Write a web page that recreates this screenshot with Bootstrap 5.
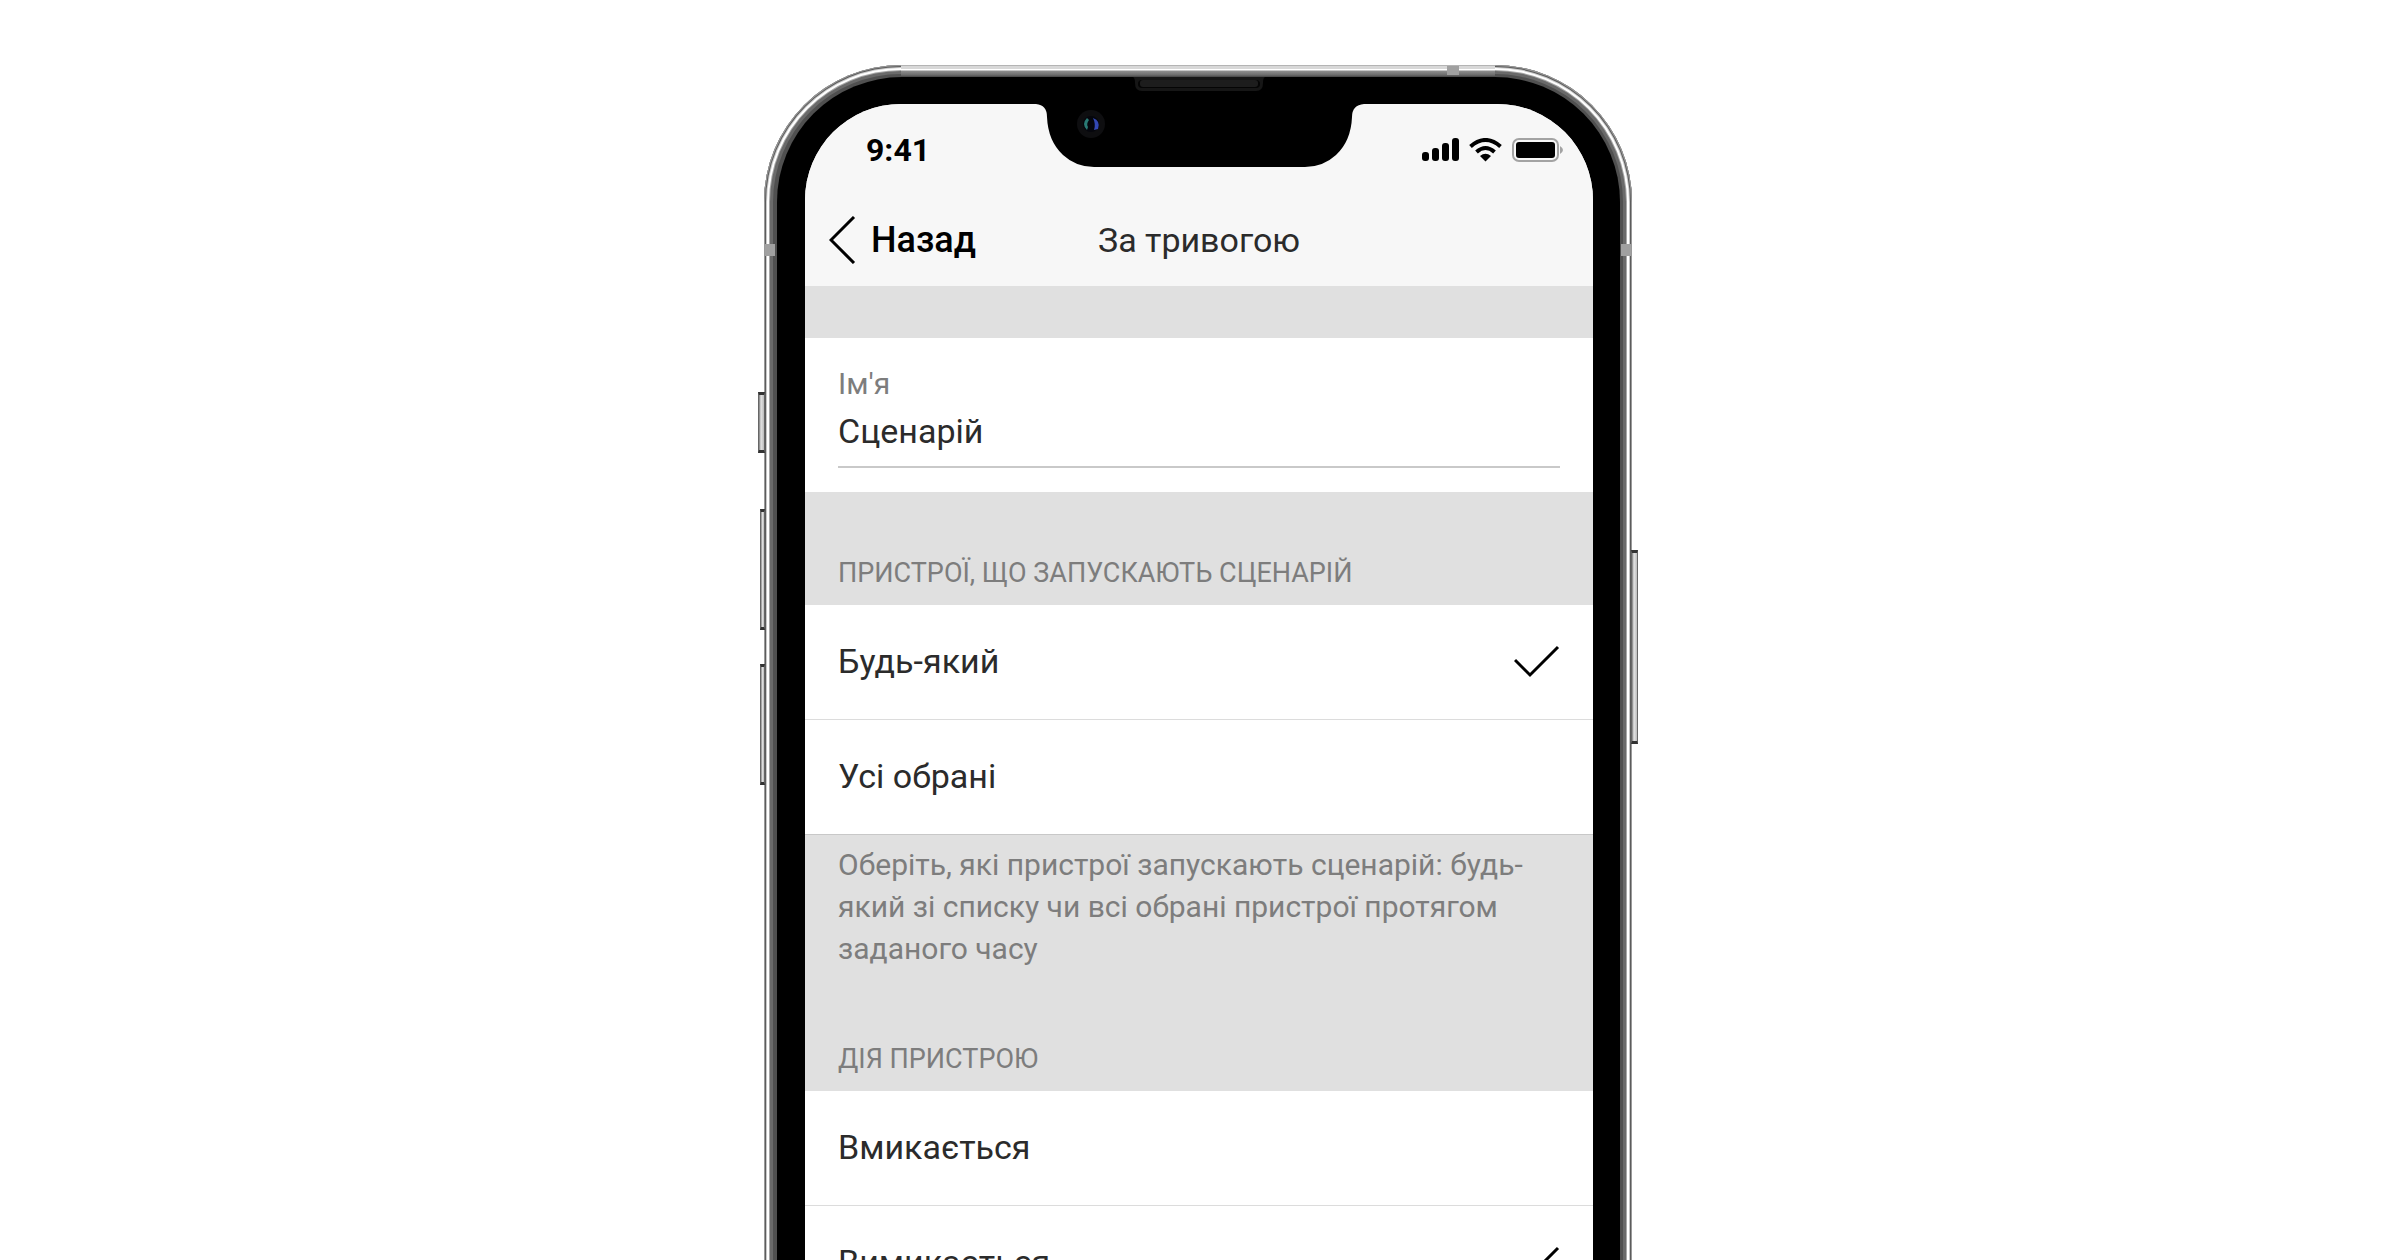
<!DOCTYPE html>
<html lang="uk">
<head>
<meta charset="utf-8">
<meta name="viewport" content="width=device-width, initial-scale=1">
<title>За тривогою</title>
<link href="https://cdn.jsdelivr.net/npm/bootstrap@5.3.0/dist/css/bootstrap.min.css" rel="stylesheet">
<style>
body{font-family:Roboto,"Noto Sans",sans-serif;background:#fff;color:#2b2b2b}
.stage{height:100vh;padding:65px 4px 0 0}
.phone{width:868px;max-width:100%;padding:12px 12px 0 13px;border-radius:137px 137px 0 0;background:#505050;
 box-shadow:inset 0 0 0 1px #9a9a9a,inset 0 0 0 2px #5c5c5c,inset 0 0 0 3px #c8c8c8,inset 0 0 0 5px #fff,inset 0 0 0 6px #a8a8a8,inset 0 0 0 9px #6a6a6a}
.bezel{padding:27px 27px 0 28px;border-radius:125px 125px 0 0;background:#000}
.screen{border-radius:96px 96px 0 0;background:#e0e0e0;min-height:1300px}
.topbar{background:#f7f7f7}
.status{height:92px;padding:0 29px 0 61px}
.clock{font-size:32px;line-height:40px;font-weight:700;color:#000}
.titlebar{height:90px;padding:0 23px 2px}
.back{font-size:36px;line-height:44px;font-weight:500;color:#000;gap:15px}
.title{font-size:34px;line-height:44px;font-weight:400}
.gap-band{height:52px}
.inset{padding-left:33px;padding-right:33px}
.field{height:154px;padding-top:28px}
.field label{font-size:30px;line-height:36px;color:#7d7d7d}
.field input{font-size:34px;line-height:44px;height:66px;padding:2px 0 8px;color:#2b2b2b;border:0;border-bottom:2px solid #c9c9c9;border-radius:0;background:none}
.caption{font-size:27px;line-height:36px;font-weight:400;color:#7d7d7d;height:113px;padding-bottom:14px}
.choice{height:115px;padding-bottom:2px;font-size:34px;line-height:44px;background:#fff;border-bottom:1px solid #dcdcdc;cursor:pointer}
.choice-last{border-bottom-color:#c8c8c8}
.choice svg{display:none}
.choice input:checked+svg{display:block}
.choice input{position:absolute;opacity:0}
.hint{font-size:30px;line-height:42px;color:#7d7d7d;margin:0;padding-top:9px;height:143px}
.key{position:absolute;background:linear-gradient(90deg,#777,#e4e4e4 40%,#bbb);border:1px solid #666;border-top:3px solid #333;border-bottom:3px solid #333}
.key-mute{left:-6px;top:327px;width:7px;height:61px}
.key-up{left:-4px;top:444px;width:5px;height:121px}
.key-down{left:-4px;top:599px;width:5px;height:121px}
.key-side{right:-6px;top:485px;width:7px;height:194px}
.top-edge{position:absolute;left:137px;right:137px;top:0;height:12px;background:linear-gradient(#b4b4b4 0 1px,#d8d8d8 1px 4px,#fff 4px 5px,#8e8e8e 6px,#6c6c6c 10px,#444)}
.seam{position:absolute;background:#a0a0a0}
.seam-left{left:1px;top:179px;width:10px;height:12px}
.seam-right{right:1px;top:179px;width:10px;height:12px}
.seam-top{right:173px;top:1px;width:12px;height:9px}
.notch{position:absolute;left:270px;top:10px}
</style>
<script src="https://cdn.jsdelivr.net/npm/bootstrap@5.3.0/dist/js/bootstrap.bundle.min.js"></script>
</head>
<body>
<div class="stage overflow-hidden">
 <div class="phone position-relative mx-auto">
  <span class="key key-mute"></span><span class="key key-up"></span><span class="key key-down"></span><span class="key key-side"></span>
  <span class="top-edge"></span><span class="seam seam-left"></span><span class="seam seam-right"></span><span class="seam seam-top"></span>
  <div class="bezel">
   <main class="screen overflow-hidden">
    <header class="topbar">
     <div class="status d-flex align-items-center justify-content-between">
      <span class="clock">9:41</span>
      <svg width="142" height="24" viewBox="0 0 142 24" aria-hidden="true">
       <rect x="0" y="14" width="7" height="9" rx="3"/><rect x="10" y="10" width="7" height="13" rx="3"/><rect x="20" y="5" width="7" height="18" rx="3"/><rect x="30" y="0" width="7" height="23" rx="3"/>
       <g fill="none" stroke="#000" stroke-width="4"><path d="M48.500 8.500Q63.500-4.500 78.500 8.500"/><path d="M54.500 14Q63.500 6 72.500 14"/></g>
       <path d="M58 18Q63.500 13.500 69 18L63.500 23.500Z"/>
       <rect x="91" y="1" width="45" height="22" rx="6" fill="none" stroke="#a3a3a3" stroke-width="2"/>
       <rect x="94" y="4" width="39" height="16" rx="3"/>
       <path d="M138 8Q144 12 138 16Z" fill="#a3a3a3"/>
      </svg>
     </div>
     <div class="titlebar d-flex align-items-center justify-content-center position-relative">
      <button class="back btn border-0 p-0 d-flex align-items-center position-absolute start-0 ms-4" type="button">
       <svg width="27" height="48" viewBox="0 0 27 48" fill="none" stroke="#000" stroke-width="3" aria-hidden="true"><path d="M25 1L2 24L25 47"/></svg>Назад
      </button>
      <h1 class="title m-0">За тривогою</h1>
     </div>
    </header>
    <div class="gap-band"></div>
    <div class="field inset bg-white">
     <label class="d-block" for="scenario">Ім'я</label>
     <input class="form-control shadow-none" id="scenario" type="text" value="Сценарій">
    </div>
    <h2 class="caption inset m-0 d-flex align-items-end">ПРИСТРОЇ, ЩО ЗАПУСКАЮТЬ СЦЕНАРІЙ</h2>
    <label class="choice inset d-flex align-items-center justify-content-between">Будь-який
     <input type="radio" name="devices" checked><svg width="46" height="34" viewBox="0 0 46 34" fill="none" stroke="#000" stroke-width="3" aria-hidden="true"><path d="M1 16L16 31L44 3"/></svg></label>
    <label class="choice choice-last inset d-flex align-items-center justify-content-between">Усі обрані
     <input type="radio" name="devices"><svg width="46" height="34" viewBox="0 0 46 34" fill="none" stroke="#000" stroke-width="3" aria-hidden="true"><path d="M1 16L16 31L44 3"/></svg></label>
    <p class="hint inset">Оберіть, які пристрої запускають сценарій: будь-який зі списку чи всі обрані пристрої протягом заданого часу</p>
    <h2 class="caption inset m-0 d-flex align-items-end">ДІЯ ПРИСТРОЮ</h2>
    <label class="choice inset d-flex align-items-center justify-content-between">Вмикається
     <input type="radio" name="action"><svg width="46" height="34" viewBox="0 0 46 34" fill="none" stroke="#000" stroke-width="3" aria-hidden="true"><path d="M1 16L16 31L44 3"/></svg></label>
    <label class="choice choice-last inset d-flex align-items-center justify-content-between">Вимикається
     <input type="radio" name="action" checked><svg width="46" height="34" viewBox="0 0 46 34" fill="none" stroke="#000" stroke-width="3" aria-hidden="true"><path d="M1 16L16 31L44 3"/></svg></label>
   </main>
  </div>
  <svg class="notch" width="332" height="94" viewBox="0 0 332 94" aria-hidden="true">
   <path d="M0 29H2Q13 30 13 42Q14 66 29 80Q42 92 60 92H271Q289 92 302 80Q317 66 318 42Q318 30 330 29H332V20H0Z"/>
   <path d="M99 2Q101 3 101 8Q101 16 108 16H222Q229 16 229 8Q229 3 231 2Z" fill="#161616"/><rect x="104" y="5" width="122" height="8" rx="4" fill="#050505"/><rect x="106" y="5" width="118" height="7" rx="3" fill="#1d1d1d"/>
   <circle cx="57" cy="49" r="14" fill="#0e0e10"/><circle cx="57" cy="49" r="8" fill="#05060d"/>
   <path d="M53 43Q47 49 53 55L54 52Q52 49 55 45Z" fill="#2a7a74"/><path d="M59 43Q67 46 64 54L60 55Q62 49 59 43Z" fill="#3348b4"/>
  </svg>
 </div>
</div>
</body>
</html>
